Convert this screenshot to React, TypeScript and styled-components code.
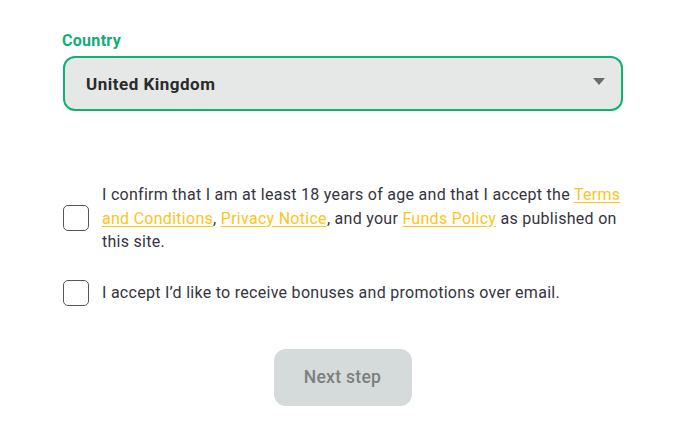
import styled, { createGlobalStyle } from 'styled-components'

const GlobalStyle = createGlobalStyle`
	html, body {
		margin: 0;
		background: #ffffff;
		font-family: Roboto, "Liberation Sans", sans-serif;
	}
`;

const Page = styled.div`
	width: 561px;
	padding: 31px 0 0 62px;
`;

const Label = styled.label`
	display: block;
	color: #0fae73;
	font-weight: 700;
	font-size: 16px;
	letter-spacing: 0.3px;
	line-height: 20px;
	margin-bottom: 5px;
`;

const Select = styled.div`
	display: flex;
	align-items: center;
	justify-content: space-between;
	box-sizing: border-box;
	height: 55px;
	margin-left: 1px;
	padding: 0 16px 0 21px;
	background: #e5e8e7;
	border: 2px solid #12b072;
	border-radius: 12px;
	color: #2a2a2a;
	font-size: 17px;
	font-weight: 700;
	letter-spacing: 0.5px;
`;

const Caret = styled.span`
	width: 0;
	height: 0;
	border-left: 6px solid transparent;
	border-right: 6px solid transparent;
	border-top: 7px solid #6b6b6b;
	margin-top: -4px;
`;

const Consents = styled.div`
	display: flex;
	flex-direction: column;
	gap: 26px;
	margin-top: 72px;
	margin-left: 1px;
`;

const Row = styled.div`
	display: flex;
	align-items: center;
	gap: 13px;
`;

const Box = styled.span`
	flex: none;
	box-sizing: border-box;
	width: 26px;
	height: 26px;
	border: 1.5px solid #555;
	border-radius: 5px;
`;

const Text = styled.p`
	margin: 0;
	color: #35343f;
	font-size: 16px;
	letter-spacing: 0.28px;
	line-height: 23.5px;
`;

const TextLink = styled.a`
	color: #fdc41c;
	text-decoration: underline;
	text-underline-offset: 2px;
`;

const Actions = styled.div`
	display: flex;
	justify-content: center;
	margin-top: 43px;
`;

const NextButton = styled.button`
	width: 138px;
	height: 57px;
	border: none;
	border-radius: 12px;
	background: #d5dbda;
	color: #7b807e;
	font-family: inherit;
	font-size: 17.5px;
	font-weight: 500;
	letter-spacing: 0.3px;
`;

export default function App() {
	return (
		<>
			<GlobalStyle />
			<Page>
				<Label>Country</Label>
				<Select>
					United Kingdom
					<Caret />
				</Select>

				<Consents>
					<Row>
						<Box />
						<Text>
							I confirm that I am at least 18 years of age and that I accept the{' '}
							<TextLink href="#">Terms and Conditions</TextLink>,{' '}
							<TextLink href="#">Privacy Notice</TextLink>, and your{' '}
							<TextLink href="#">Funds Policy</TextLink> as published on this site.
						</Text>
					</Row>
					<Row>
						<Box />
						<Text>I accept I’d like to receive bonuses and promotions over email.</Text>
					</Row>
				</Consents>

				<Actions>
					<NextButton type="button">Next step</NextButton>
				</Actions>
			</Page>
		</>
	);
}
